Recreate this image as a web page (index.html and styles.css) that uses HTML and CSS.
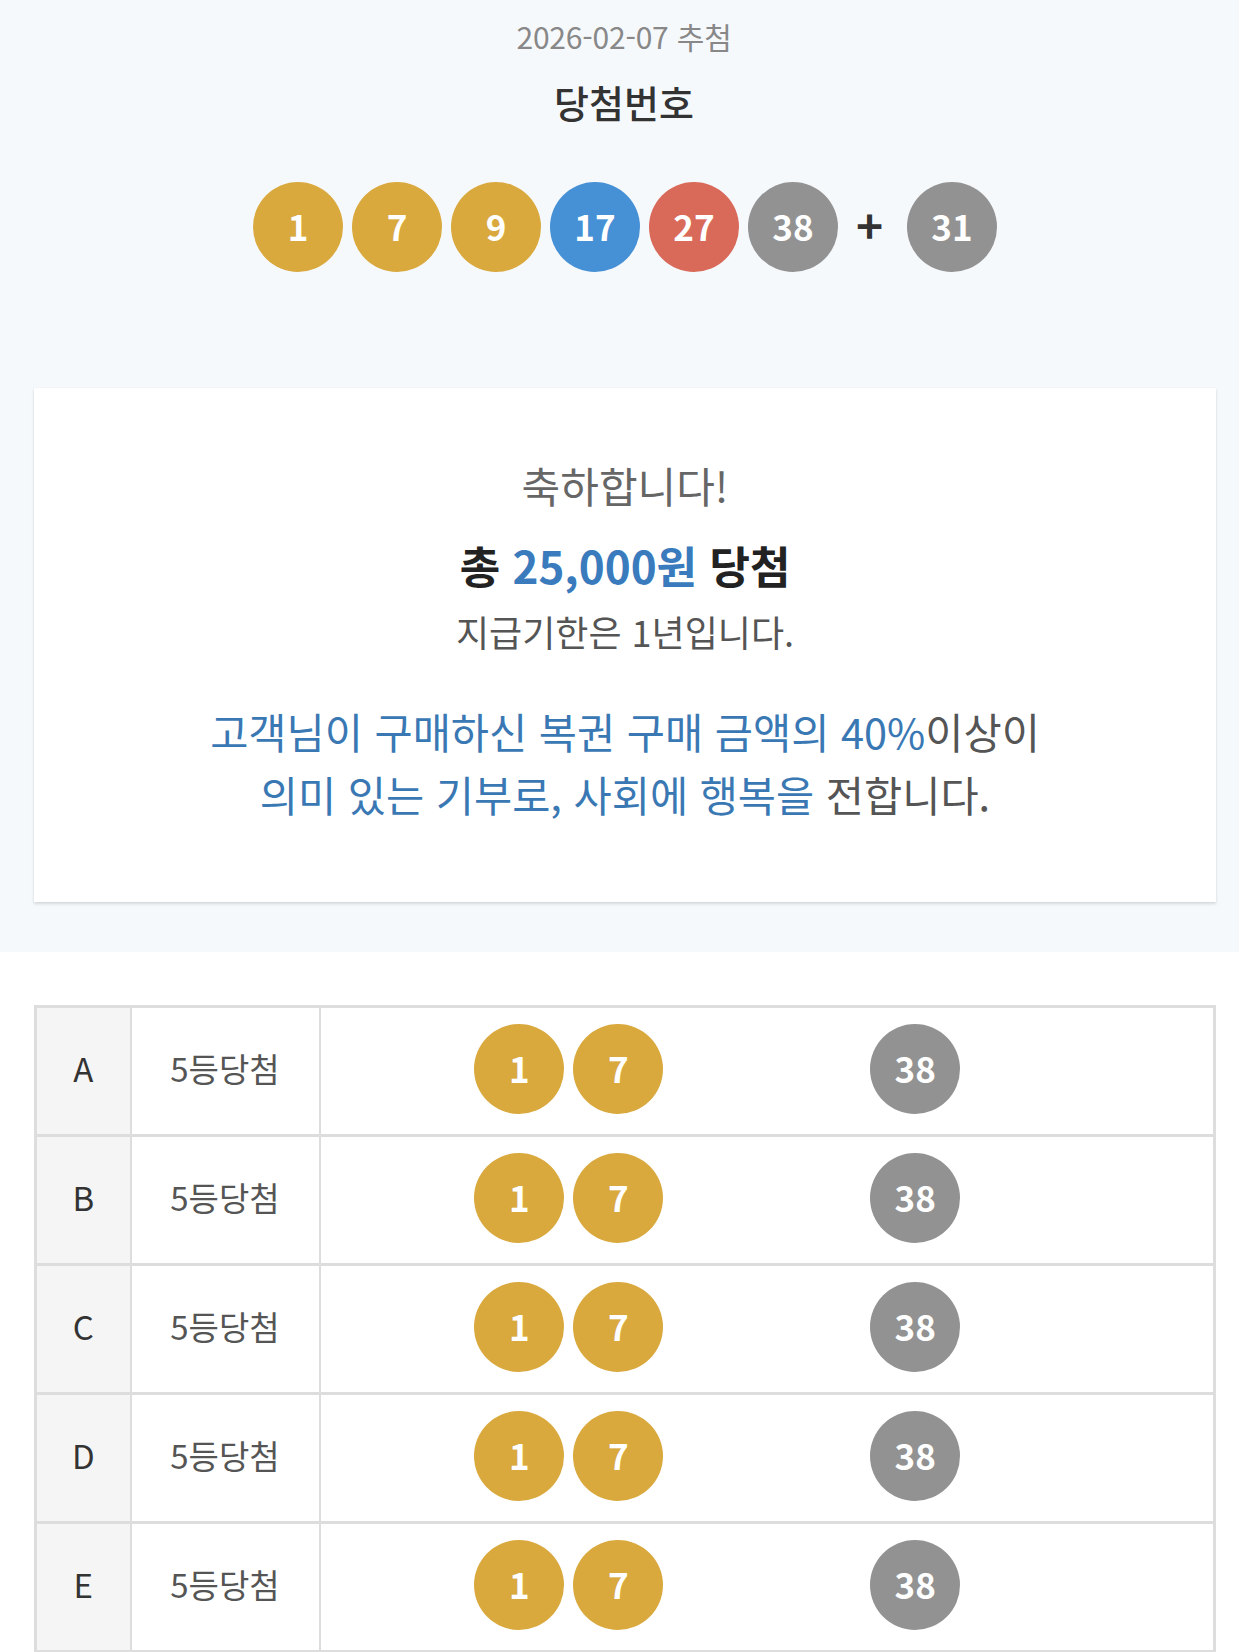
FILE: index.html
```html
<!DOCTYPE html>
<html lang="ko">
<head>
<meta charset="utf-8">
<title>당첨번호</title>
<link rel="stylesheet" href="styles.css">
</head>
<body>
<section class="draw">
  <p class="date">2026-02-07 추첨</p>
  <h2 class="title">당첨번호</h2>
  <div class="balls">
    <span class="ball yellow">1</span>
    <span class="ball yellow">7</span>
    <span class="ball yellow">9</span>
    <span class="ball blue">17</span>
    <span class="ball red">27</span>
    <span class="ball gray">38</span>
    <span class="plus">+</span>
    <span class="ball gray">31</span>
  </div>
  <div class="card">
    <p class="congrats">축하합니다!</p>
    <p class="total">총 <span class="amount">25,000원</span> 당첨</p>
    <p class="deadline">지급기한은 1년입니다.</p>
    <p class="donate"><span class="blue-text">고객님이 구매하신 복권 구매 금액의 40%</span>이상이<br><span class="blue-text">의미 있는 기부로, 사회에 행복을</span> 전합니다.</p>
  </div>
</section>
<table class="result">
  <tbody>
    <tr>
      <td class="slot">A</td>
      <td class="rank">5등당첨</td>
      <td class="nums"><div class="row-balls"><span class="ball yellow">1</span><span class="ball yellow">7</span><span class="ball empty"></span><span class="ball empty"></span><span class="ball gray">38</span><span class="ball empty"></span></div></td>
    </tr>
    <tr>
      <td class="slot">B</td>
      <td class="rank">5등당첨</td>
      <td class="nums"><div class="row-balls"><span class="ball yellow">1</span><span class="ball yellow">7</span><span class="ball empty"></span><span class="ball empty"></span><span class="ball gray">38</span><span class="ball empty"></span></div></td>
    </tr>
    <tr>
      <td class="slot">C</td>
      <td class="rank">5등당첨</td>
      <td class="nums"><div class="row-balls"><span class="ball yellow">1</span><span class="ball yellow">7</span><span class="ball empty"></span><span class="ball empty"></span><span class="ball gray">38</span><span class="ball empty"></span></div></td>
    </tr>
    <tr>
      <td class="slot">D</td>
      <td class="rank">5등당첨</td>
      <td class="nums"><div class="row-balls"><span class="ball yellow">1</span><span class="ball yellow">7</span><span class="ball empty"></span><span class="ball empty"></span><span class="ball gray">38</span><span class="ball empty"></span></div></td>
    </tr>
    <tr>
      <td class="slot">E</td>
      <td class="rank">5등당첨</td>
      <td class="nums"><div class="row-balls"><span class="ball yellow">1</span><span class="ball yellow">7</span><span class="ball empty"></span><span class="ball empty"></span><span class="ball gray">38</span><span class="ball empty"></span></div></td>
    </tr>
  </tbody>
</table>
</body>
</html>
```

FILE: styles.css
```css
* { box-sizing: border-box; }

html, body {
  margin: 0;
  padding: 0;
  background: #ffffff;
  font-family: "Noto Sans CJK KR", "Noto Sans", sans-serif;
  overflow: hidden;
}

.draw {
  background: #f6f9fc;
  padding: 17px 0 50px;
  height: 952px;
}

.date {
  margin: 0;
  text-align: center;
  font-size: 30px;
  line-height: 38px;
  color: #888888;
  letter-spacing: -0.2px;
  padding-left: 9px;
}

.title {
  margin: 25px 0 0;
  text-align: center;
  font-size: 38px;
  line-height: 44px;
  font-weight: 500;
  color: #333333;
  padding-left: 9px;
}

.balls {
  margin-top: 58px;
  display: flex;
  justify-content: center;
  align-items: center;
  gap: 9px;
  padding-left: 11px;
}

.ball {
  width: 90px;
  height: 90px;
  border-radius: 50%;
  display: flex;
  align-items: center;
  justify-content: center;
  color: #ffffff;
  font-size: 35px;
  font-weight: 700;
  line-height: 1;
  padding-bottom: 3px;
  flex: none;
}

.yellow { background: #d9a93e; }
.blue { background: #4690d5; }
.red { background: #d96a5a; }
.gray { background: #929292; }
.empty { background: transparent; }

.plus {
  width: 51px;
  text-align: center;
  font-size: 46px;
  font-weight: 700;
  line-height: 1;
  color: #333333;
  margin-right: 3px;
  margin-left: -3px;
  position: relative;
  top: -3px;
}

.card {
  margin: 116px 0 0 34px;
  width: 1182px;
  height: 514px;
  background: #ffffff;
  box-shadow: 0 2px 3px rgba(0, 0, 0, 0.13), 0 0 2px rgba(0, 0, 0, 0.04);
  padding-top: 72px;
  text-align: center;
}

.card p { margin: 0; }

.congrats {
  font-size: 42px;
  line-height: 50px;
  color: #666666;
}

.total {
  margin-top: 29px !important;
  font-size: 44px;
  line-height: 52px;
  font-weight: 700;
  color: #222222;
}

.amount { color: #3a7bbd; }

.deadline {
  margin-top: 19px !important;
  font-size: 36px;
  line-height: 42px;
  color: #555555;
}

.donate {
  margin-top: 48px !important;
  font-size: 41.5px;
  line-height: 63px;
  color: #555555;
}

.blue-text { color: #3a78b4; }

.result {
  margin: 53px 0 0 34px;
  width: 1182px;
  border-collapse: collapse;
  border: 3px solid #dddddd;
}

.result td {
  border-top: 3px solid #dddddd;
  border-bottom: 3px solid #dddddd;
  border-left: 2px solid #dddddd;
  border-right: 2px solid #dddddd;
  height: 129px;
  padding: 0 0 4px;
  text-align: center;
  vertical-align: middle;
}

.result td.slot { border-left: 3px solid #dddddd; padding-bottom: 6px; }
.result td.rank { padding-bottom: 6px; }
.result td.nums { border-right: 3px solid #dddddd; }

.slot {
  width: 95px;
  background: #f5f5f5;
  font-size: 33px;
  color: #333333;
}

.rank {
  width: 189px;
  font-size: 33px;
  color: #555555;
}

.row-balls {
  display: flex;
  justify-content: center;
  align-items: center;
  gap: 9px;
}
```
